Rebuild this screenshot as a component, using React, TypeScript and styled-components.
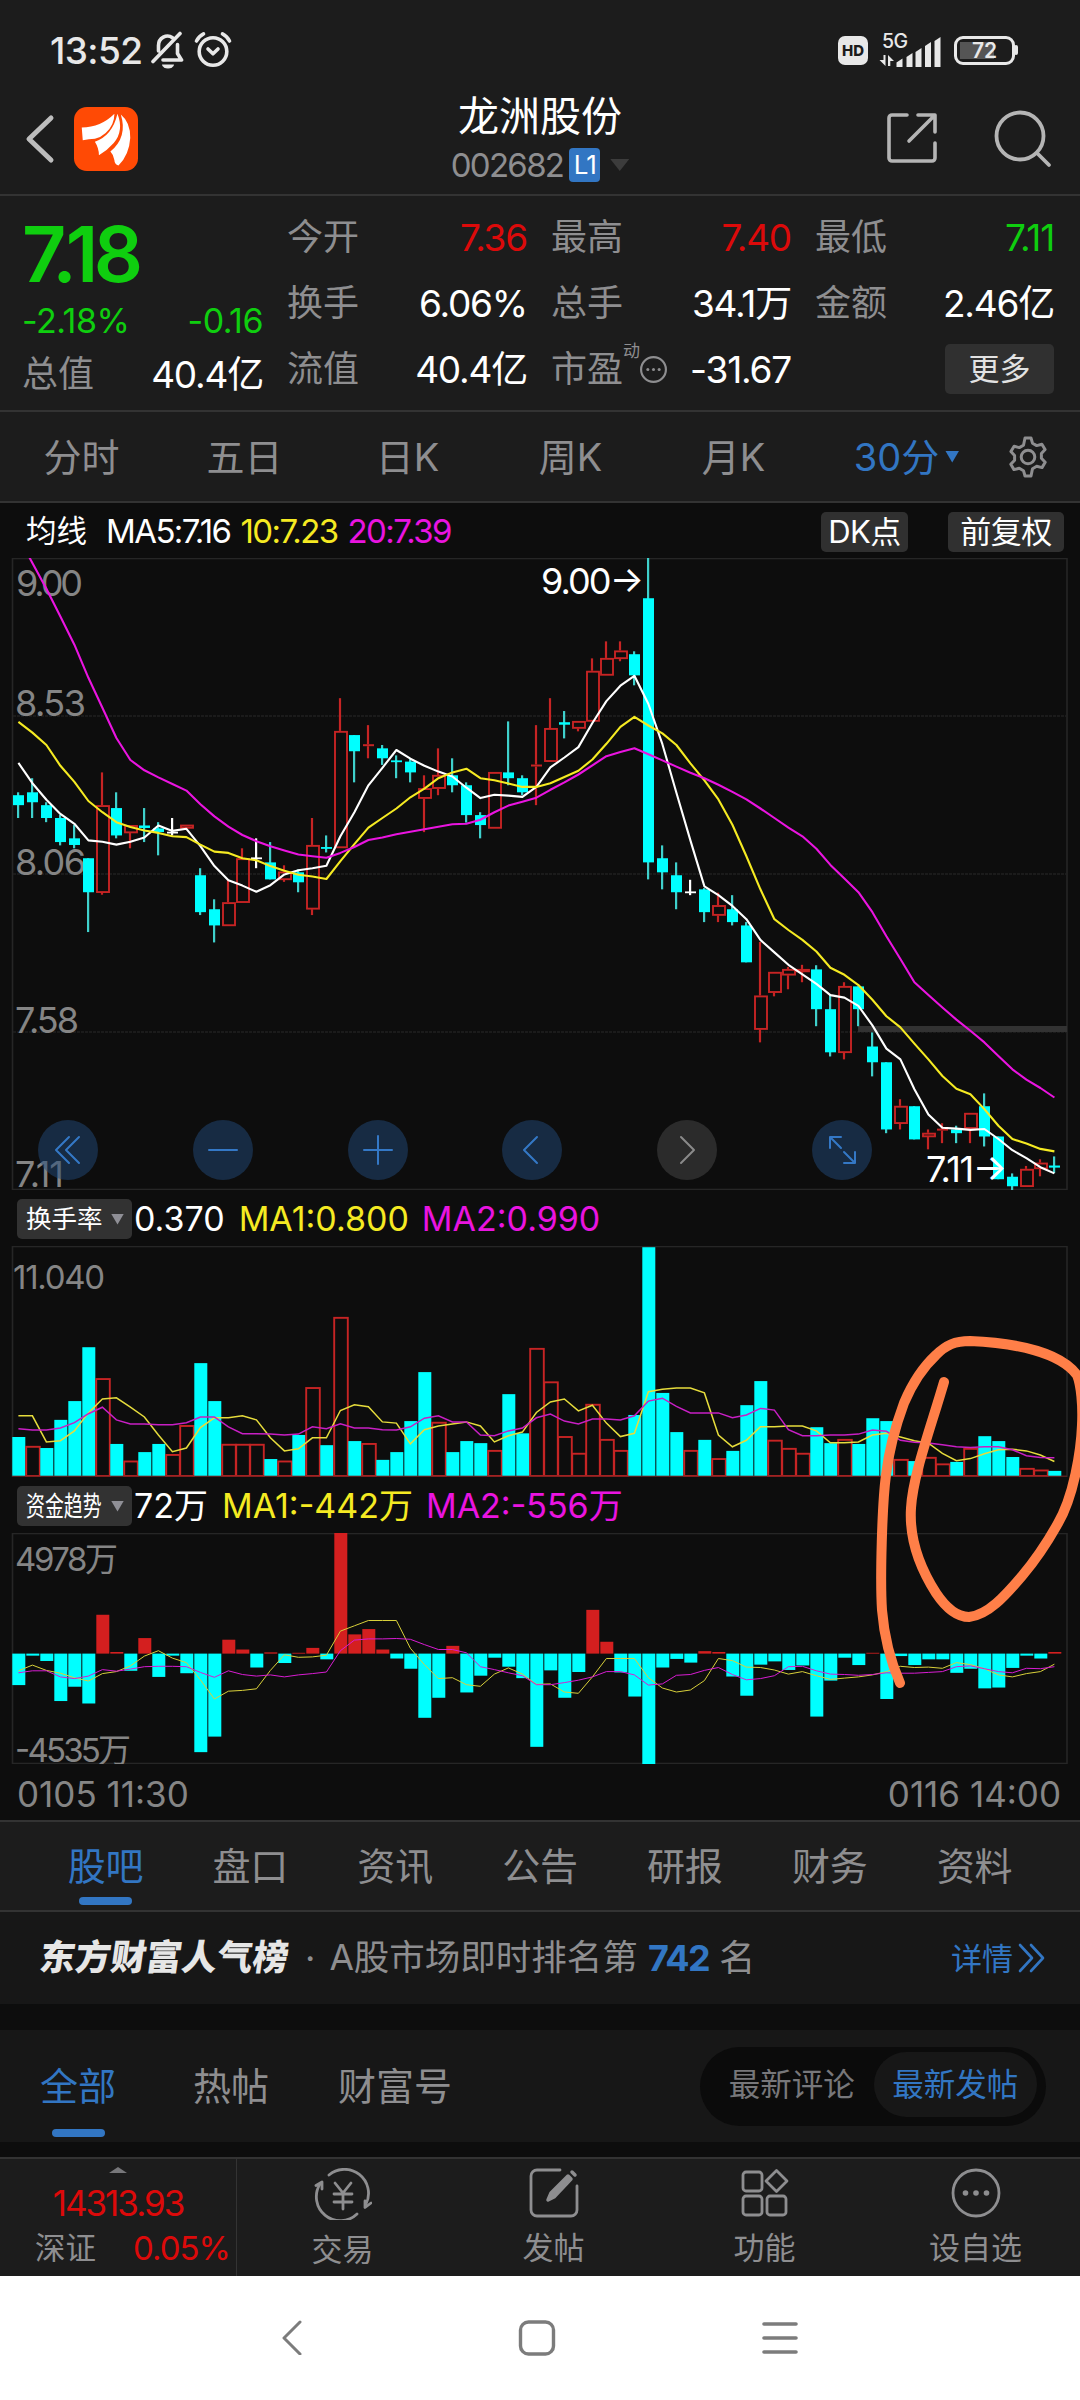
import React from 'react';
import styled, { createGlobalStyle, css } from 'styled-components';

const C = {
  panel: '#1c1c1c',
  card: '#171717',
  ink: '#0d0d0d',
  line: '#333333',
  grid: '#262626',
  grey: '#8e8e90',
  dim: '#858585',
  blue: '#3276c3',
  green: '#0fce0f',
  red: '#dc0a0a',
  cyan: '#00ffff',
  yellow: '#f5ea22',
  magenta: '#ea14e0',
  scribble: '#ff7f48',
};

const Global = createGlobalStyle`
  body { margin: 0; background: ${C.ink}; }
  * { box-sizing: border-box; }
`;

const Page = styled.div`
  position: relative;
  width: 1080px;
  height: 2400px;
  overflow: hidden;
  display: flex;
  flex-direction: column;
  background: ${C.ink};
  color: #fff;
  font-family: Inter, 'Noto Sans CJK SC', sans-serif;
  font-size: 36px;
  line-height: 1;
  white-space: nowrap;
`;

interface TProps {
  $size?: number;
  $color?: string;
  $ls?: number;
  $weight?: number;
}
const T = styled.span<TProps>`
  ${(p) => p.$size && css`font-size: ${p.$size}px;`}
  ${(p) => p.$color && css`color: ${p.$color};`}
  ${(p) => p.$ls !== undefined && css`letter-spacing: ${p.$ls}px;`}
  ${(p) => p.$weight && css`font-weight: ${p.$weight};`}
`;

/* ---------- status bar ---------- */

const StatusBar = styled.div`
  height: 92px;
  flex: none;
  display: flex;
  align-items: center;
  justify-content: space-between;
  padding: 8px 62px 0 50px;
  background: ${C.panel};
  color: #e8e8e8;
`;
const StatusGroup = styled.div<{ $gap: number }>`
  display: flex;
  align-items: center;
  gap: ${(p) => p.$gap}px;
`;
const HdBadge = styled.span`
  width: 30px;
  height: 29px;
  border-radius: 7px;
  background: #e8e8e8;
  color: #1c1c1c;
  font-size: 15px;
  font-weight: 800;
  line-height: 29px;
  text-align: center;
`;
const Battery = styled.span`
  width: 61px;
  height: 29px;
  border: 3px solid #e8e8e8;
  border-radius: 9px;
  background: linear-gradient(90deg, #555 70%, transparent 70%) 3px 3px / 48px 17px no-repeat;
  font-size: 21px;
  font-weight: 600;
  line-height: 23px;
  text-align: center;
`;
const BatteryTip = styled.span`
  width: 4px;
  height: 10px;
  margin-left: -1px;
  border-radius: 2px;
  background: #e8e8e8;
`;

/* ---------- header ---------- */

const Header = styled.header`
  height: 104px;
  flex: none;
  display: grid;
  grid-template-columns: 400px 1fr 400px;
  align-items: center;
  border-bottom: 2px solid ${C.line};
  background: ${C.panel};
`;
const HeaderLeft = styled.div`
  display: flex;
  align-items: center;
  gap: 18px;
  padding: 0 0 9px 24px;
`;
const HeaderRight = styled.div`
  display: flex;
  align-items: center;
  justify-content: flex-end;
  gap: 52px;
  padding: 0 28px 8px 0;
`;
const HeaderTitle = styled.div`
  display: flex;
  flex-direction: column;
  align-items: center;
  gap: 11px;
  padding-bottom: 8px;
`;
const CodeLine = styled.div`
  display: flex;
  align-items: center;
  gap: 6px;
  height: 34px;
  color: ${C.grey};
`;
const Level = styled.span`
  width: 31px;
  height: 34px;
  border-radius: 4px;
  background: ${C.blue};
  color: #fff;
  font-size: 26px;
  letter-spacing: -1px;
  line-height: 34px;
  text-align: center;
`;
const Triangle = styled.span<{ $w: number; $h: number; $c: string; $up?: boolean; $ml?: number }>`
  width: ${(p) => p.$w}px;
  height: ${(p) => p.$h}px;
  margin-left: ${(p) => p.$ml ?? 0}px;
  background: ${(p) => p.$c};
  clip-path: ${(p) => (p.$up ? 'polygon(50% 0, 100% 100%, 0 100%)' : 'polygon(0 0, 100% 0, 50% 100%)')};
`;

/* ---------- quote ---------- */

const Quote = styled.section`
  height: 216px;
  flex: none;
  display: grid;
  grid-template-columns: 241px 240px 240px 239px;
  column-gap: 24px;
  padding: 8px 22px 0;
  border-bottom: 2px solid ${C.line};
  background: ${C.panel};
`;
const QuoteCol = styled.div`
  display: flex;
  flex-direction: column;
`;
const QuoteRow = styled.div<{ $h?: number }>`
  height: ${(p) => p.$h ?? 66}px;
  display: flex;
  align-items: center;
  justify-content: space-between;
`;
const BigPrice = styled.div`
  height: 92px;
  padding-top: 4px;
  color: ${C.green};
  font-size: 77px;
  font-weight: 600;
  line-height: 92px;
  letter-spacing: -4.4px;
`;
const Label = styled.span`
  display: flex;
  align-items: center;
  color: ${C.grey};
`;
const Sup = styled.span`
  align-self: flex-start;
  margin-top: -8px;
  font-size: 17px;
`;
const MoreButton = styled.button`
  width: 109px;
  height: 50px;
  margin-left: auto;
  padding: 0;
  border: 0;
  border-radius: 5px;
  background: #303030;
  color: #e2e2e2;
  font: 31px/50px Inter, 'Noto Sans CJK SC', sans-serif;
`;

/* ---------- period tabs ---------- */

const Periods = styled.nav`
  height: 91px;
  flex: none;
  display: grid;
  grid-template-columns: repeat(5, 163px) 183px 60px;
  align-items: center;
  justify-items: center;
  border-bottom: 2px solid ${C.line};
  background: ${C.panel};
  color: ${C.grey};
  font-size: 38px;
`;
const Period = styled.span<{ $active?: boolean }>`
  display: flex;
  align-items: center;
  color: ${(p) => (p.$active ? C.blue : C.grey)};
`;

/* ---------- charts ---------- */

const Legend = styled.div<{ $h: number; $pl: number; $pt?: number }>`
  height: ${(p) => p.$h}px;
  flex: none;
  display: flex;
  align-items: center;
  padding: ${(p) => p.$pt ?? 0}px 16px 0 ${(p) => p.$pl}px;
`;
const LegendTag = styled.span`
  width: 115px;
  height: 40px;
  display: flex;
  align-items: center;
  justify-content: space-between;
  padding: 0 8px 0 9px;
  border-radius: 5px;
  background: #323232;
  font-size: 25.5px;
`;
const Condensed = styled.span`
  width: 76px;
  font-size: 27px;
  transform: scaleX(0.7);
  transform-origin: left;
`;
const Chip = styled.button<{ $w: number; $ml: string }>`
  width: ${(p) => p.$w}px;
  height: 40px;
  margin-left: ${(p) => p.$ml};
  padding: 0;
  border: 0;
  border-radius: 5px;
  background: #303030;
  color: #fff;
  font: 31px/40px Inter, 'Noto Sans CJK SC', sans-serif;
  letter-spacing: -0.5px;
`;
const ChartBox = styled.div<{ $h: number }>`
  position: relative;
  height: ${(p) => p.$h}px;
  flex: none;
`;
const ChartSvg = styled.svg`
  display: block;
  width: 1080px;
  height: 100%;
`;
const Controls = styled.div`
  position: absolute;
  left: 38px;
  bottom: 10px;
  display: flex;
  gap: 94.8px;
`;
const RoundButton = styled.button<{ $off?: boolean }>`
  width: 60px;
  height: 60px;
  padding: 0;
  border: 0;
  border-radius: 50%;
  display: grid;
  place-items: center;
  background: ${(p) => (p.$off ? 'rgba(60,60,60,.65)' : 'rgba(33,74,122,.5)')};
  color: ${(p) => (p.$off ? '#8a8a8a' : '#3478c6')};
`;
const AxisRow = styled.div`
  height: 56px;
  flex: none;
  display: flex;
  align-items: center;
  justify-content: space-between;
  padding: 4px 19px 0 17px;
  color: ${C.dim};
  font-size: 35px;
`;

/* ---------- content tabs ---------- */

const Tabs = styled.nav`
  height: 92px;
  flex: none;
  display: flex;
  padding: 0 33px;
  border-top: 2px solid ${C.line};
  border-bottom: 2px solid ${C.line};
  background: ${C.panel};
`;
const Tab = styled.div<{ $active?: boolean }>`
  position: relative;
  flex: 1;
  display: flex;
  align-items: center;
  justify-content: center;
  color: ${(p) => (p.$active ? C.blue : C.grey)};
  font-size: 38px;
  letter-spacing: -0.2px;
`;
const Underline = styled.i<{ $bottom: number }>`
  position: absolute;
  left: 50%;
  bottom: ${(p) => p.$bottom}px;
  width: 53px;
  height: 8px;
  margin-left: -26.5px;
  border-radius: 4px;
  background: ${C.blue};
`;
const Rank = styled.div`
  height: 92px;
  flex: none;
  display: flex;
  align-items: center;
  padding: 0 34px 0 40px;
  background: ${C.card};
  color: ${C.grey};
`;
const RankLogo = styled.span`
  width: 251px;
  color: #e6e6e6;
  font-size: 35.5px;
  font-weight: 900;
  transform: skewX(-8deg);
`;
const Detail = styled.span`
  margin-left: auto;
  display: flex;
  align-items: center;
  gap: 5px;
  color: ${C.blue};
  font-size: 31px;
`;
const Filter = styled.div`
  height: 112px;
  flex: none;
  margin-top: 26px;
  display: flex;
  align-items: center;
  padding: 0 34px 0 40px;
  background: ${C.card};
`;
const FilterTab = styled.div<{ $active?: boolean; $mr: number }>`
  position: relative;
  height: 112px;
  margin-right: ${(p) => p.$mr}px;
  display: flex;
  align-items: center;
  color: ${(p) => (p.$active ? C.blue : C.grey)};
  font-size: 38px;
`;
const Toggle = styled.div`
  width: 346px;
  height: 79px;
  margin-left: auto;
  display: flex;
  align-items: center;
  padding: 0 9px 4px 10px;
  border-radius: 40px;
  background: #0b0b0b;
`;
const ToggleItem = styled.span<{ $active?: boolean }>`
  flex: 1;
  height: 65px;
  border-radius: 33px;
  background: ${(p) => (p.$active ? C.card : 'transparent')};
  color: ${(p) => (p.$active ? C.blue : '#77777a')};
  font-size: 31.5px;
  line-height: 65px;
  text-align: center;
`;

/* ---------- bottom bars ---------- */

const BottomBar = styled.div`
  height: 119px;
  flex: none;
  margin-top: 15px;
  display: grid;
  grid-template-columns: 237px repeat(4, 211px);
  border-top: 2px solid ${C.line};
  background: ${C.panel};
`;
const IndexCell = styled.div`
  display: flex;
  flex-direction: column;
  align-items: center;
  padding-top: 8px;
  border-right: 1px solid ${C.line};
  color: ${C.red};
`;
const IndexLine = styled.div`
  width: 100%;
  display: flex;
  align-items: center;
  justify-content: space-between;
  margin-top: 11px;
  padding: 0 6px 0 35px;
`;
const Action = styled.div`
  display: flex;
  flex-direction: column;
  align-items: center;
  gap: 14px;
  padding-top: 9px;
  color: ${C.grey};
  font-size: 31px;
`;
const SystemNav = styled.div`
  flex: 1;
  display: flex;
  align-items: flex-start;
  padding: 43px 0 0 280px;
  background: #fff;
`;
const NavItem = styled.span<{ $w: number; $ml?: number }>`
  width: ${(p) => p.$w}px;
  height: 36px;
  margin-left: ${(p) => p.$ml ?? 0}px;
  display: flex;
`;
const Scribble = styled.svg`
  position: absolute;
  left: 860px;
  top: 1320px;
  width: 220px;
  height: 380px;
  pointer-events: none;
`;

/* ---------- data ---------- */

type Kind = 'c' | 'r' | 'w';
type Candle = [Kind, number, number, number, number];

/* kind, body top, body bottom, wick top, wick bottom; depth units below the session high */
const candles: Candle[] = [
  ['c', 591, 615, 584, 646], ['c', 584, 608, 550, 646], ['c', 615, 646, 608, 656], ['c', 646, 704, 638, 712],
  ['c', 695, 711, 663, 719], ['c', 743, 825, 743, 921], ['r', 615, 826, 536, 831], ['c', 622, 688, 584, 695],
  ['r', 663, 682, 663, 719], ['c', 664, 670, 622, 704], ['c', 671, 680, 656, 736], ['w', 679, 683, 646, 688],
  ['r', 662, 671, 662, 671], ['c', 784, 873, 767, 880], ['c', 866, 905, 842, 946], ['r', 849, 906, 795, 906],
  ['r', 743, 850, 719, 850], ['w', 741, 745, 695, 767], ['c', 753, 794, 704, 794], ['r', 775, 795, 760, 800],
  ['c', 777, 801, 770, 825], ['r', 711, 866, 646, 880], ['c', 716, 720, 688, 729], ['r', 436, 718, 357, 718],
  ['c', 446, 485, 446, 560], ['r', 468, 472, 422, 502], ['c', 478, 502, 470, 518], ['c', 507, 511, 495, 550],
  ['c', 510, 536, 504, 560], ['r', 574, 599, 543, 680], ['r', 542, 575, 478, 591], ['c', 543, 567, 502, 584],
  ['c', 567, 639, 560, 657], ['c', 639, 663, 632, 695], ['r', 535, 671, 535, 671], ['c', 536, 550, 413, 567],
  ['c', 550, 584, 543, 591], ['r', 517, 521, 422, 615], ['r', 429, 510, 357, 510], ['c', 415, 421, 388, 454],
  ['r', 412, 430, 412, 437], ['r', 291, 413, 261, 413], ['r', 260, 302, 220, 302], ['r', 242, 262, 220, 268],
  ['c', 251, 302, 244, 326], ['c', 116, 753, 19, 794], ['c', 743, 777, 712, 818], ['c', 784, 825, 753, 866],
  ['w', 823, 827, 795, 832], ['c', 818, 873, 815, 897], ['r', 856, 881, 826, 897], ['c', 866, 897, 832, 905],
  ['c', 905, 994, 897, 994], ['r', 1074, 1156, 945, 1187], ['r', 1017, 1067, 1017, 1076], ['r', 1010, 1025, 1005, 1059],
  ['r', 1010, 1017, 1000, 1042], ['c', 1011, 1107, 1001, 1148], ['c', 1107, 1211, 1072, 1221], ['r', 1051, 1212, 1042, 1228],
  ['c', 1052, 1107, 1052, 1148], ['c', 1197, 1235, 1163, 1269], ['c', 1235, 1397, 1235, 1406], ['r', 1340, 1383, 1324, 1397],
  ['c', 1341, 1421, 1341, 1421], ['r', 1405, 1415, 1397, 1445], ['r', 1395, 1398, 1382, 1430], ['c', 1397, 1406, 1388, 1430],
  ['r', 1357, 1395, 1357, 1430], ['c', 1341, 1414, 1310, 1438], ['c', 1414, 1517, 1414, 1517], ['c', 1511, 1534, 1503, 1543],
  ['r', 1492, 1535, 1485, 1535], ['r', 1477, 1492, 1469, 1510], ['c', 1484, 1489, 1462, 1502],
];

const ma5 = [513, 562, 602, 636, 660, 700, 703, 710, 703, 693, 664, 677, 672, 714, 762, 796, 809, 824, 808, 782, 772, 767, 761, 690, 632, 567, 525, 482, 503, 520, 534, 546, 573, 598, 590, 592, 595, 571, 524, 500, 475, 417, 364, 327, 303, 371, 468, 585, 700, 811, 832, 858, 890, 940, 970, 1000, 1023, 1046, 1073, 1079, 1099, 1146, 1202, 1228, 1300, 1361, 1393, 1395, 1398, 1396, 1420, 1447, 1466, 1488, 1503];
const ma10 = [414, 440, 470, 520, 559, 605, 632, 656, 668, 676, 682, 690, 692, 710, 727, 730, 743, 748, 762, 773, 783, 787, 793, 750, 709, 669, 646, 623, 596, 575, 550, 536, 527, 550, 555, 563, 571, 571, 562, 547, 532, 505, 467, 426, 402, 423, 442, 470, 514, 555, 601, 662, 738, 818, 890, 916, 940, 968, 1007, 1024, 1049, 1084, 1124, 1151, 1190, 1228, 1268, 1299, 1312, 1348, 1388, 1420, 1431, 1444, 1450];
const ma20 = [-32, 31, 93, 160, 228, 308, 380, 453, 506, 531, 548, 564, 580, 613, 642, 667, 687, 702, 714, 724, 734, 738, 742, 730, 716, 699, 693, 685, 679, 673, 667, 661, 660, 650, 632, 616, 607, 597, 578, 560, 541, 519, 497, 487, 478, 492, 507, 522, 537, 550, 566, 583, 601, 623, 646, 669, 690, 720, 759, 792, 825, 873, 931, 986, 1042, 1073, 1103, 1132, 1159, 1187, 1220, 1252, 1277, 1297, 1320];

const turnover = 'c605 r629 c632 c563 c517 c385 r463 c622 r665 c642 c622 r649 r578 c424 c517 r624 r624 r624 c659 r665 c600 r485 c625 r313 c615 r622 c661 c642 c566 c446 r570 c642 c615 c620 r639 c500 c596 r389 r471 r605 r646 r526 r612 r639 c551 c140 c497 c593 r639 c612 r659 c639 c527 c468 r614 r634 r646 c581 c620 r612 c622 c559 c566 r661 c664 r656 r672 c666 r634 c603 c615 c654 r683 r687 c688'
  .split(' ');
const turnMa1 = [553, 553, 617, 614, 590, 546, 512, 509, 532, 556, 600, 641, 632, 582, 558, 558, 553, 563, 607, 639, 634, 607, 607, 540, 526, 531, 568, 571, 622, 587, 578, 573, 568, 578, 617, 602, 593, 545, 519, 512, 541, 527, 571, 604, 596, 494, 488, 485, 485, 497, 600, 629, 613, 580, 580, 578, 578, 590, 619, 619, 617, 600, 596, 605, 614, 620, 645, 663, 658, 646, 636, 635, 639, 649, 665];
const turnMa2 = [585, 588, 588, 583, 570, 548, 532, 563, 573, 573, 575, 575, 570, 556, 556, 580, 597, 597, 598, 600, 598, 580, 585, 573, 583, 583, 587, 588, 580, 559, 553, 568, 568, 600, 602, 590, 583, 558, 549, 566, 573, 561, 561, 563, 553, 517, 510, 530, 546, 546, 546, 558, 551, 535, 539, 587, 602, 602, 600, 600, 598, 588, 591, 613, 618, 620, 624, 629, 631, 629, 629, 636, 651, 655, 656];

const FUND_ZERO = 1136;
const fund = [1213, 1141, 1154, 1252, 1217, 1258, 1041, 1132, 1178, 1098, 1193, 1141, 1184, 1377, 1339, 1102, 1126, 1170, 1133, 1159, 1134, 1122, 1150, 841, 1089, 1076, 1126, 1148, 1173, 1293, 1244, 1117, 1231, 1190, 1146, 1168, 1196, 1364, 1177, 1244, 1181, 1029, 1107, 1182, 1241, 1406, 1170, 1149, 1158, 1130, 1132, 1192, 1239, 1163, 1155, 1176, 1165, 1290, 1202, 1146, 1164, 1134, 1247, 1142, 1164, 1150, 1150, 1183, 1173, 1221, 1219, 1171, 1141, 1148, 1132];
const fundMa1 = [1178, 1164, 1177, 1184, 1195, 1203, 1185, 1180, 1166, 1142, 1129, 1147, 1158, 1200, 1247, 1228, 1226, 1222, 1177, 1139, 1145, 1144, 1140, 1081, 1068, 1055, 1055, 1055, 1123, 1163, 1197, 1195, 1212, 1216, 1186, 1171, 1186, 1211, 1210, 1230, 1233, 1193, 1148, 1148, 1148, 1195, 1220, 1230, 1225, 1202, 1148, 1153, 1169, 1170, 1176, 1186, 1180, 1190, 1199, 1196, 1193, 1188, 1180, 1167, 1170, 1169, 1172, 1158, 1163, 1173, 1188, 1193, 1185, 1180, 1162];
const fundMa2 = [1183, 1178, 1178, 1193, 1197, 1191, 1175, 1179, 1174, 1168, 1167, 1167, 1168, 1182, 1194, 1178, 1187, 1191, 1188, 1193, 1188, 1185, 1181, 1129, 1103, 1100, 1100, 1099, 1101, 1114, 1126, 1126, 1134, 1168, 1175, 1183, 1190, 1212, 1212, 1207, 1201, 1193, 1180, 1180, 1188, 1213, 1210, 1189, 1187, 1177, 1170, 1187, 1200, 1197, 1190, 1168, 1167, 1178, 1186, 1187, 1189, 1187, 1183, 1184, 1184, 1182, 1180, 1168, 1166, 1173, 1180, 1183, 1172, 1173, 1168];

const xAt = (i: number) => 18 + i * 14;
const scale = (top: number, bottom: number, h: number) => (v: number) => ((v - top) / (bottom - top)) * h;
const line = (vals: number[], y: (v: number) => number) =>
  vals.map((v, i) => `${xAt(i) + 0.4},${y(v).toFixed(1)}`).join(' ');

const RED = '#c62424';

function Frame({ h }: { h: number }) {
  return <rect x={12.5} y={0.5} width={1054.5} height={h - 1} fill="none" stroke={C.grid} strokeWidth={1.6} />;
}

interface NoteProps { x: number; y: number; w: number; size: number; color?: string; children: string }
function Note({ x, y, w, size, color = C.dim, children }: NoteProps) {
  return (
    <text x={x} y={y} textLength={w} fontSize={size} fill={color} fontFamily="Inter, 'Noto Sans CJK SC', sans-serif">
      {children}
    </text>
  );
}

function PriceChart() {
  const H = 632;
  const y = scale(19, 1543, H);
  return (
    <ChartSvg viewBox={`0 0 1080 ${H}`}>
      <clipPath id="price"><rect x={12} y={0} width={1056} height={H} /></clipPath>
      <Frame h={H} />
      {[158, 316, 474].map((g) => (
        <line key={g} x1={13} x2={1067} y1={g} y2={g} stroke="#202020" strokeWidth={1.5} strokeDasharray="3 1" />
      ))}
      <Note x={16} y={38} w={67} size={36}>9.00</Note>
      <Note x={15} y={158} w={71} size={36}>8.53</Note>
      <Note x={15} y={317} w={71} size={36}>8.06</Note>
      <Note x={15} y={475} w={64} size={36}>7.58</Note>
      <Note x={15} y={629} w={49} size={36}>7.11</Note>
      <rect x={858} y={468} width={209} height={6} fill="#323232" />
      {candles.map(([k, t, b, hi, lo], i) => {
        const x = xAt(i);
        if (k === 'r') {
          const top = y(t);
          const bh = Math.max(y(b) - top, 2);
          return (
            <g key={i} stroke={RED} fill="none">
              <line x1={x} x2={x} y1={y(hi)} y2={top} strokeWidth={2.2} />
              <line x1={x} x2={x} y1={top + bh} y2={y(lo)} strokeWidth={2.2} />
              {b - t < 7 ? (
                <line x1={x - 5} x2={x + 6} y1={top + 1} y2={top + 1} strokeWidth={2} />
              ) : (
                <rect x={x - 5} y={top + 0.9} width={12} height={Math.max(bh - 1.5, 1)} strokeWidth={1.9} />
              )}
            </g>
          );
        }
        const col = k === 'c' ? C.cyan : '#fff';
        return (
          <g key={i} fill={col}>
            <rect x={x - 1} y={y(hi)} width={2.2} height={y(lo) - y(hi)} fill={k === 'c' ? '#3fd0cc' : '#fff'} />
            <rect x={x - 5} y={y(t)} width={11} height={Math.max(y(b) - y(t), 1.8)} />
          </g>
        );
      })}
      <g fill="none" strokeWidth={2.1} clipPath="url(#price)" strokeLinejoin="round">
        <polyline points={line(ma5, y)} stroke="#fff" />
        <polyline points={line(ma10, y)} stroke={C.yellow} />
        <polyline points={line(ma20, y)} stroke={C.magenta} />
      </g>
      <Note x={541} y={36} w={103} size={36} color="#fff">{'9.00->'}</Note>
      <Note x={926} y={624} w={81} size={36} color="#fff">{'7.11->'}</Note>
    </ChartSvg>
  );
}

function TurnoverChart() {
  const H = 231;
  const y = scale(137, 703, H);
  return (
    <ChartSvg viewBox={`0 0 1080 ${H}`}>
      <Frame h={H} />
      <Note x={13} y={43} w={92} size={33}>11.040</Note>
      {turnover.map((s, i) => {
        const t = y(Number(s.slice(1)));
        return s[0] === 'c' ? (
          <rect key={i} x={xAt(i) - 5.7} y={t} width={13} height={H - 1 - t} fill={C.cyan} />
        ) : (
          <rect key={i} x={xAt(i) - 5.8} y={t} width={13.6} height={H - 1 - t} fill={C.ink} stroke={RED} strokeWidth={1.9} />
        );
      })}
      <line x1={12} x2={1067} y1={H - 0.8} y2={H - 0.8} stroke="#6a2020" strokeWidth={1} />
      <g fill="none" strokeWidth={1.5}>
        <polyline points={line(turnMa1, y)} stroke="#e6dc3c" />
        <polyline points={line(turnMa2, y)} stroke="#c81fc4" />
      </g>
    </ChartSvg>
  );
}

function FundChart() {
  const H = 231;
  const y = scale(841, 1406, H);
  const zero = y(FUND_ZERO);
  return (
    <ChartSvg viewBox={`0 0 1080 ${H}`}>
      <Frame h={H} />
      <Note x={15} y={38} w={103} size={33}>4978万</Note>
      {fund.map((v, i) => {
        const up = v < FUND_ZERO;
        const e = y(v);
        return (
          <rect key={i} x={xAt(i) - 5.7} y={up ? e : zero} width={13} height={Math.abs(zero - e)} fill={up ? '#d41f1f' : C.cyan} />
        );
      })}
      <Note x={15} y={229} w={116} size={33}>-4535万</Note>
      <g fill="none" strokeWidth={1}>
        <polyline points={line(fundMa1, y)} stroke="#d8d03a" />
        <polyline points={line(fundMa2, y)} stroke="#d81cd2" />
      </g>
    </ChartSvg>
  );
}

/* ---------- icons ---------- */

const Ico = ({ w, h, box, sw = 2, children }: { w: number; h: number; box?: string; sw?: number; children: React.ReactNode }) => (
  <svg width={w} height={h} viewBox={box ?? `0 0 ${w} ${h}`} fill="none" stroke="currentColor" strokeWidth={sw} strokeLinecap="round" strokeLinejoin="round">
    {children}
  </svg>
);

const BellOff = () => (
  <Ico w={34} h={38} sw={3.6}>
    <path d="M7.5 20V14.500a9 9.500 0 0 1 14-7.800M26.500 13.500v9l4 6.500H12M2 30.500 29 2.500" />
    <path d="M11 33.500h12a6 4 0 0 1-12 0Z" fill="currentColor" stroke="none" />
  </Ico>
);
const Alarm = () => (
  <Ico w={38} h={38} sw={3.6}>
    <circle cx={19} cy={20.500} r={13.800} />
    <path d="M14 18l5 4.800 5-4.800" />
    <path d="M2.500 10Q5 5 9.500 2.800M35.500 10Q33 5 28.500 2.800" />
  </Ico>
);
const Signal = () => (
  <svg width={64} height={36} viewBox="0 0 64 36" fill="#e8e8e8">
    <text x={3} y={16} fontSize={19.5} fontWeight={500} textLength={26} fontFamily="Inter, sans-serif">5G</text>
    <path d="M4.500 23h2v11L0.500 28h4zM9 23l6 6h-3.700v5H9z" />
    <path d="M17.500 35v-4.500l6-4V35zM27.500 35V25l6-4V35zM36.500 35V20l6-4V35zM46 35V14l6-4V35zM55.500 35V9l6-4V35z" />
  </svg>
);
const AppLogo = () => (
  <svg width={64} height={64} viewBox="132 256 190 190">
    <rect x={132} y={256} width={190} height={190} rx={38} fill="#ff4a05" />
    <path fill="#fff" d="M155 317Q212 316 252 276Q252 310 226 333Q212 346 194 350Q176 351 158 355ZM261 276Q281 326 250 363Q232 384 206 399Q206 378 194 359Q246 341 261 276ZM271 278Q300 302 299 348Q296 398 264 430Q252 426 252 414Q250 398 240 388Q292 345 271 278Z" />
  </svg>
);
const Gear = () => (
  <Ico w={42} h={42} sw={3}>
    <path d="M18 2h6l1.500 5.200 4.200 2.400 5.200-1.400 3.200 5.300-3.700 4v4.800l3.800 4-3.200 5.300-5.300-1.300-4.200 2.400L24 40h-6l-1.500-5.300-4.200-2.400-5.300 1.300-3.200-5.300 3.800-4v-4.800l-3.700-4 3.200-5.300 5.200 1.400 4.200-2.400z" />
    <circle cx={21} cy={21} r={6.800} />
  </Ico>
);
const TradeIcon = () => (
  <Ico w={58} h={52} sw={2.8}>
    <path d="M15 7A24 24 0 0 1 52 36M43 46A24 24 0 0 1 6 16" />
    <path d="M2 17.500 8 14v7M57 35l-6 4.500V33" />
    <path d="M21 15l8 10 8-10M20 26h18M20 34h18M29 25v16" />
  </Ico>
);
const PostIcon = () => (
  <Ico w={50} h={50} sw={2.8}>
    <path d="M31 2H8a6 6 0 0 0-6 6v34a6 6 0 0 0 6 6h34a6 6 0 0 0 6-6V18" />
    <path d="M19 32l3-7L39 8l3 3-17 18zM43 4l3 3" strokeWidth={3.500} fill="currentColor" />
  </Ico>
);
const FeatureIcon = () => (
  <Ico w={48} h={50} sw={2.8}>
    <rect x={2} y={4} width={19} height={19} rx={3} />
    <rect x={2} y={28} width={19} height={19} rx={3} />
    <rect x={26} y={28} width={19} height={19} rx={3} />
    <path d="M35.500 2.500 46 13 35.500 23.500 25 13z" />
  </Ico>
);
const DotsIcon = ({ s, sw }: { s: number; sw: number }) => (
  <Ico w={s} h={s} box="0 0 50 50" sw={sw}>
    <circle cx={25} cy={25} r={23} />
    {[14.5, 25, 35.5].map((x) => <circle key={x} cx={x} cy={25} r={2.8} fill="currentColor" stroke="none" />)}
  </Ico>
);

/* ---------- page ---------- */

export default function App() {
  return (
    <Page>
      <Global />
      <StatusBar>
        <StatusGroup $gap={9}>
          <T $size={37} $weight={500} $ls={-0.6}>13:52</T>
          <BellOff />
          <Alarm />
        </StatusGroup>
        <StatusGroup $gap={0}>
          <StatusGroup $gap={11}>
            <HdBadge>HD</HdBadge>
            <Signal />
            <Battery>72</Battery>
          </StatusGroup>
          <StatusGroup $gap={0}><BatteryTip /></StatusGroup>
        </StatusGroup>
      </StatusBar>

      <Header>
        <HeaderLeft>
          <Ico w={32} h={50} sw={5}><path d="M27 4 5 25l22 21" stroke="#bdbdbd" /></Ico>
          <AppLogo />
        </HeaderLeft>
        <HeaderTitle>
          <T $size={41}>龙洲股份</T>
          <CodeLine>
            <T $size={33} $ls={-1.7}>002682</T>
            <Level>L1</Level>
            <Triangle $w={19} $h={12} $c="#3c3c3c" $ml={4} />
          </CodeLine>
        </HeaderTitle>
        <HeaderRight>
          <Ico w={54} h={54} sw={3.6}>
            <g stroke="#b5b5b5">
              <path d="M21 3H6a3 3 0 0 0-3 3v40a3 3 0 0 0 3 3h40a3 3 0 0 0 3-3V31" />
              <path d="M32 3h17v17M48 4 23 29" />
            </g>
          </Ico>
          <Ico w={60} h={60} sw={3.8}>
            <g stroke="#b5b5b5"><circle cx={28} cy={27} r={23.500} /><path d="M45 44l12 12" /></g>
          </Ico>
        </HeaderRight>
      </Header>

      <Quote>
        <QuoteCol>
          <BigPrice>7.18</BigPrice>
          <QuoteRow $h={50}>
            <T $size={34} $color={C.green} $ls={-0.5}>-2.18%</T>
            <T $size={34} $color={C.green} $ls={-0.5}>-0.16</T>
          </QuoteRow>
          <QuoteRow $h={56}>
            <Label>总值</Label>
            <T $size={37} $ls={-1.2}>40.4亿</T>
          </QuoteRow>
        </QuoteCol>
        <QuoteCol>
          <QuoteRow><Label>今开</Label><T $size={37} $color={C.red} $ls={-1.2}>7.36</T></QuoteRow>
          <QuoteRow><Label>换手</Label><T $size={37} $ls={-1.2}>6.06%</T></QuoteRow>
          <QuoteRow><Label>流值</Label><T $size={37} $ls={-1.2}>40.4亿</T></QuoteRow>
        </QuoteCol>
        <QuoteCol>
          <QuoteRow><Label>最高</Label><T $size={37} $color={C.red} $ls={-1.2}>7.40</T></QuoteRow>
          <QuoteRow><Label>总手</Label><T $size={37} $ls={-1.2}>34.1万</T></QuoteRow>
          <QuoteRow>
            <Label>市盈<Sup>动</Sup><DotsIcon s={27} sw={4} /></Label>
            <T $size={37} $ls={-1.2}>-31.67</T>
          </QuoteRow>
        </QuoteCol>
        <QuoteCol>
          <QuoteRow><Label>最低</Label><T $size={37} $color={C.green} $ls={-1.2}>7.11</T></QuoteRow>
          <QuoteRow><Label>金额</Label><T $size={37} $ls={-1.2}>2.46亿</T></QuoteRow>
          <QuoteRow><MoreButton>更多</MoreButton></QuoteRow>
        </QuoteCol>
      </Quote>

      <Periods>
        {['分时', '五日', '日K', '周K', '月K'].map((p) => <Period key={p}>{p}</Period>)}
        <Period $active>30分<Triangle $w={14} $h={12} $c={C.blue} $ml={6} /></Period>
        <Gear />
      </Periods>

      <Legend $h={55} $pl={26} $pt={2}>
        <T $size={30.5}>均线</T>
        <T $size={33} $ls={-1.6} style={{ marginLeft: 19 }}>MA5:7.16</T>
        <T $size={33} $ls={-1.6} $color={C.yellow} style={{ marginLeft: 10 }}>10:7.23</T>
        <T $size={33} $ls={-1.6} $color={C.magenta} style={{ marginLeft: 10 }}>20:7.39</T>
        <Chip $w={87} $ml="auto">DK点</Chip>
        <Chip $w={116} $ml="40px">前复权</Chip>
      </Legend>
      <ChartBox $h={632}>
        <PriceChart />
        <Controls>
          <RoundButton><Ico w={32} h={32}><path d="M17 3 4 16l13 13M27 3 14 16l13 13" /></Ico></RoundButton>
          <RoundButton><Ico w={32} h={32}><path d="M2 16h28" /></Ico></RoundButton>
          <RoundButton><Ico w={32} h={32}><path d="M2 16h28M16 2v28" /></Ico></RoundButton>
          <RoundButton><Ico w={32} h={32}><path d="M21 3 8 16l13 13" /></Ico></RoundButton>
          <RoundButton $off><Ico w={32} h={32}><path d="M10 3l13 13-13 13" /></Ico></RoundButton>
          <RoundButton><Ico w={32} h={32}><path d="M15 3H4v11M4 3l11 11M29 18v11H18M29 29 18 18" /></Ico></RoundButton>
        </Controls>
      </ChartBox>

      <Legend $h={56} $pl={17} $pt={2}>
        <LegendTag>换手率<Triangle $w={13} $h={11} $c="#8f8f96" /></LegendTag>
        <T $size={34} style={{ marginLeft: 2 }}>0.370</T>
        <T $size={34} $color={C.yellow} style={{ marginLeft: 14 }}>MA1:0.800</T>
        <T $size={34} $color={C.magenta} style={{ marginLeft: 13 }}>MA2:0.990</T>
      </Legend>
      <ChartBox $h={231}><TurnoverChart /></ChartBox>
      <Legend $h={56} $pl={17} $pt={2}>
        <LegendTag><Condensed>资金趋势</Condensed><Triangle $w={13} $h={11} $c="#8f8f96" /></LegendTag>
        <T $size={34} style={{ marginLeft: 2 }}>72万</T>
        <T $size={34} $color={C.yellow} style={{ marginLeft: 14 }}>MA1:-442万</T>
        <T $size={34} $color={C.magenta} style={{ marginLeft: 13 }}>MA2:-556万</T>
      </Legend>
      <ChartBox $h={231}><FundChart /></ChartBox>
      <AxisRow><span>0105 11:30</span><span>0116 14:00</span></AxisRow>

      <Tabs>
        {['股吧', '盘口', '资讯', '公告', '研报', '财务', '资料'].map((t, i) => (
          <Tab key={t} $active={i === 0}>{t}{i === 0 && <Underline $bottom={5} />}</Tab>
        ))}
      </Tabs>
      <Rank>
        <RankLogo>东方财富人气榜</RankLogo>
        <T style={{ margin: '0 14px' }}>·</T>
        <T $size={35.5}>A股市场即时排名第</T>
        <T $weight={700} $color={C.blue} $ls={-1.5} style={{ margin: '0 10px' }}>742</T>
        <T>名</T>
        <Detail>
          详情
          <Ico w={28} h={30} sw={2.6}><path d="M2 2l12 13L2 28M13 2l12 13-12 13" /></Ico>
        </Detail>
      </Rank>
      <Filter>
        <FilterTab $active $mr={77}>全部<Underline $bottom={5} /></FilterTab>
        <FilterTab $mr={69}>热帖</FilterTab>
        <FilterTab $mr={0}>财富号</FilterTab>
        <Toggle>
          <ToggleItem>最新评论</ToggleItem>
          <ToggleItem $active>最新发帖</ToggleItem>
        </Toggle>
      </Filter>

      <BottomBar>
        <IndexCell>
          <Triangle $w={18} $h={6} $c="#77777a" $up />
          <T $size={35} $ls={-2} style={{ marginTop: 13 }}>14313.93</T>
          <IndexLine>
            <T $size={30.5} $color={C.grey}>深证</T>
            <T $size={33} $ls={-1}>0.05%</T>
          </IndexLine>
        </IndexCell>
        <Action><TradeIcon />交易</Action>
        <Action><PostIcon />发帖</Action>
        <Action><FeatureIcon />功能</Action>
        <Action><DotsIcon s={50} sw={2.8} />设自选</Action>
      </BottomBar>
      <SystemNav>
        <NavItem $w={24}><Ico w={24} h={36} sw={3}><path d="M20 3 4 19l16 16" stroke="#7c7c7c" /></Ico></NavItem>
        <NavItem $w={38} $ml={214}><Ico w={38} h={38} sw={3.4}><rect x={2.500} y={3} width={33} height={32} rx={8} stroke="#7c7c7c" /></Ico></NavItem>
        <NavItem $w={38} $ml={205}><Ico w={38} h={38} sw={3.6}><path d="M3 5h32M3 19h32M3 33h32" stroke="#7c7c7c" /></Ico></NavItem>
      </SystemNav>

      <Scribble viewBox="860 1320 220 380" fill="none" stroke={C.scribble} strokeWidth={10} strokeLinecap="round" strokeLinejoin="round">
        <path d="M944 1382C930 1430 913 1475 911 1508C909 1540 920 1568 936 1593C946 1608 957 1617 969 1617C988 1615 1005 1596 1022 1576C1038 1557 1048 1541 1057 1525C1074 1497 1081 1450 1082 1425C1083 1405 1081 1385 1077 1375C1060 1352 1015 1343 970 1341C955 1341 946 1345 936 1355C922 1368 912 1384 904 1403C894 1430 889 1450 886 1475C882 1505 880 1580 882 1610C884 1635 890 1660 900 1683" />
      </Scribble>
    </Page>
  );
}
